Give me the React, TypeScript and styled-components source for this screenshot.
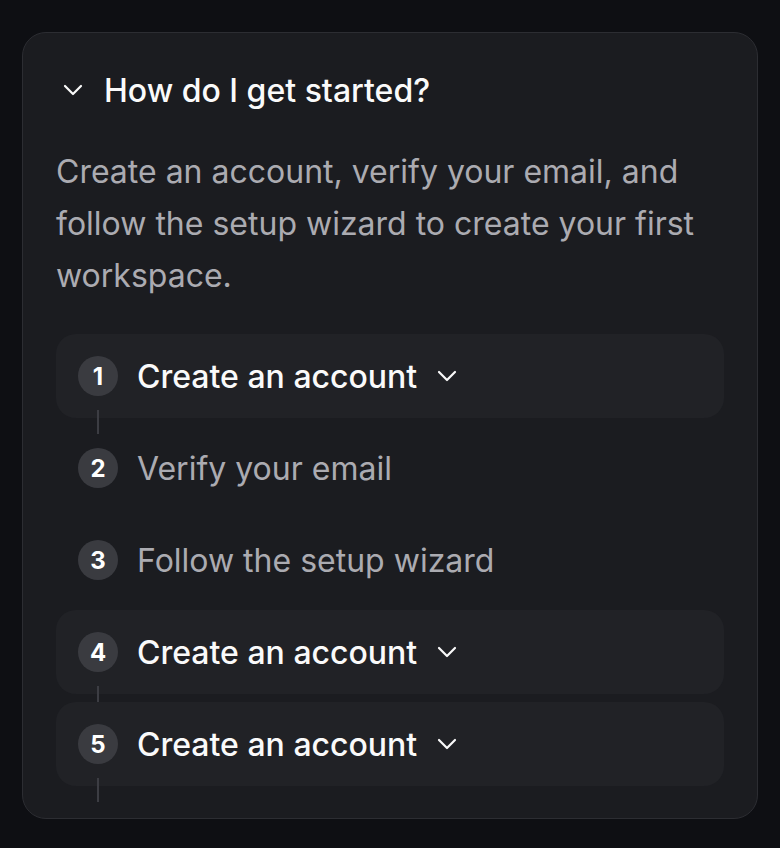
import React from "react";
import styled, { createGlobalStyle } from "styled-components";

const GlobalStyle = createGlobalStyle`
  html, body {
    margin: 0;
    padding: 0;
    background: #0e0f13;
  }
  body {
    font-family: Inter, "Noto Sans", sans-serif;
    -webkit-font-smoothing: antialiased;
  }
`;

const Page = styled.main`
  padding: 32px 22px;
  min-height: 848px;
  box-sizing: border-box;
`;

const Card = styled.section`
  box-sizing: border-box;
  width: 736px;
  background: #1b1c20;
  border: 1px solid #2c2d32;
  border-radius: 24px;
  padding: 33px 33px 32px;
  display: flex;
  flex-direction: column;
  gap: 32px;
`;

const Header = styled.button`
  all: unset;
  display: flex;
  align-items: center;
  gap: 21px;
  padding-left: 7px;
  height: 48px;
  color: #fafafa;
  font-family: Inter, sans-serif;
  font-size: 32px;
  font-weight: 500;
  cursor: pointer;
`;

const Description = styled.p`
  margin: 0;
  color: #ababb1;
  font-size: 32px;
  line-height: 52px;
  font-weight: 400;
`;

const StepList = styled.ol`
  list-style: none;
  margin: 0;
  padding: 0;
  display: flex;
  flex-direction: column;
  gap: 8px;
`;

const StepRow = styled.li<{ $expanded: boolean }>`
  position: relative;
  height: 84px;
  display: flex;
  align-items: center;
  gap: 19px;
  padding: 0 22px;
  border-radius: 20px;
  background: ${(p) => (p.$expanded ? "#212226" : "transparent")};
`;

const StepNumber = styled.span`
  flex: none;
  width: 40px;
  height: 40px;
  border-radius: 50%;
  background: #3a3b40;
  color: #ffffff;
  display: flex;
  align-items: center;
  justify-content: center;
  font-size: 24px;
  font-weight: 700;
`;

const StepLabel = styled.span<{ $expanded: boolean }>`
  font-size: 32px;
  font-weight: ${(p) => (p.$expanded ? 500 : 400)};
  color: ${(p) => (p.$expanded ? "#fafafa" : "#ababb1")};
`;

const Connector = styled.span`
  position: absolute;
  left: 41px;
  top: 76px;
  width: 2px;
  height: 24px;
  background: #3c3d43;
`;

const ChevronSvg = styled.svg`
  flex: none;
  display: block;
`;

const Chevron = () => (
  <ChevronSvg width="20" height="12" viewBox="0 0 20 12" fill="none">
    <polyline
      points="2,2 10,10 18,2"
      stroke="#fafafa"
      strokeWidth="2.2"
      strokeLinecap="round"
      strokeLinejoin="round"
    />
  </ChevronSvg>
);

const StepChevron = styled.span`
  display: flex;
  margin-left: 1px;
`;

type Step = { n: number; label: string; expanded: boolean };

const steps: Step[] = [
  { n: 1, label: "Create an account", expanded: true },
  { n: 2, label: "Verify your email", expanded: false },
  { n: 3, label: "Follow the setup wizard", expanded: false },
  { n: 4, label: "Create an account", expanded: true },
  { n: 5, label: "Create an account", expanded: true },
];

export default function App() {
  return (
    <>
      <GlobalStyle />
      <Page>
        <Card>
          <Header>
            <Chevron />
            How do I get started?
          </Header>
          <Description>
            Create an account, verify your email, and follow the setup wizard
            to create your first workspace.
          </Description>
          <StepList>
            {steps.map((s) => (
              <StepRow key={s.n} $expanded={s.expanded}>
                <StepNumber>{s.n}</StepNumber>
                <StepLabel $expanded={s.expanded}>{s.label}</StepLabel>
                {s.expanded && (
                  <StepChevron>
                    <Chevron />
                  </StepChevron>
                )}
                {s.expanded && <Connector />}
              </StepRow>
            ))}
          </StepList>
        </Card>
      </Page>
    </>
  );
}
